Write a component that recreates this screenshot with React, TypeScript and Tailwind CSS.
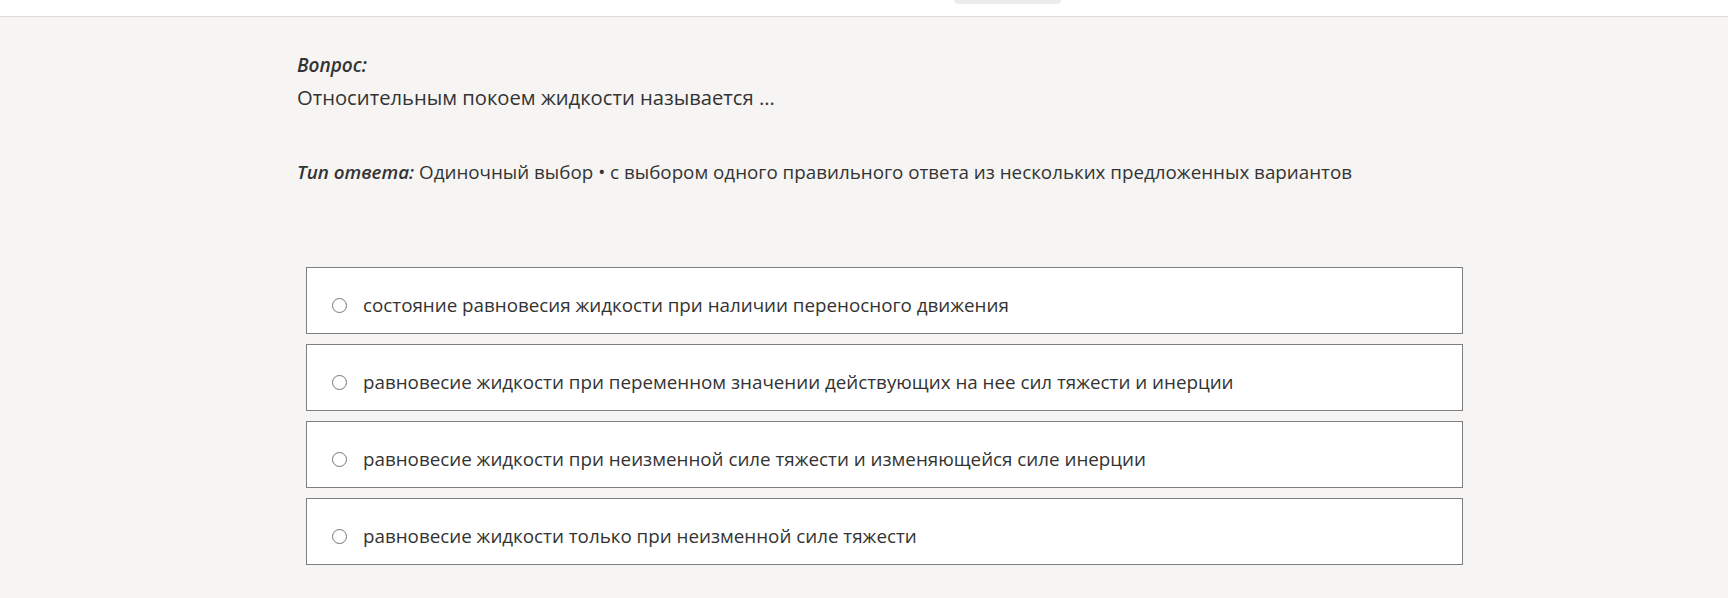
const options = [
  'состояние равновесия жидкости при наличии переносного движения',
  'равновесие жидкости при переменном значении действующих на нее сил тяжести и инерции',
  'равновесие жидкости при неизменной силе тяжести и изменяющейся силе инерции',
  'равновесие жидкости только при неизменной силе тяжести',
]

export default function App() {
  return (
    <div className="min-h-[598px] bg-[#f6f5f3] text-[#333] font-['Open_Sans','Noto_Sans',sans-serif]">
      <div className="h-[17px] bg-white border-b border-[#dcdbd8] flex justify-center">
        <div className="ml-[287px] w-[107px] h-[4px] rounded-b-lg bg-[#ececec]" />
      </div>
      <div className="pl-[297px] pr-[265px] pt-[35px]">
        <div className="text-[19px] font-semibold italic leading-[26px]">Вопрос:</div>
        <div className="mt-[2px] text-[20.2px] leading-[34px]">Относительным покоем жидкости называется ...</div>
        <div className="mt-[45px] text-[18.8px] leading-[26px]">
          <span className="font-semibold italic">Тип ответа:</span> Одиночный выбор • с выбором одного правильного ответа из нескольких предложенных вариантов
        </div>
        <div className="mt-[82px] ml-[9px] flex flex-col gap-[10px]">
          {options.map((o) => (
            <label
              key={o}
              className="h-[67px] bg-white border-[1.5px] border-[#7f7f7f] flex items-center pl-[25px] pt-[9px] gap-[16px] text-[18.8px]"
            >
              <span className="w-[15px] h-[15px] rounded-full border-[1.5px] border-[#777] shrink-0" />
              <span>{o}</span>
            </label>
          ))}
        </div>
      </div>
    </div>
  )
}
